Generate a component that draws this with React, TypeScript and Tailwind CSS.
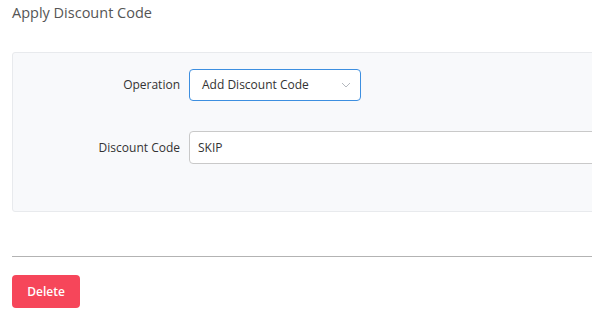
export default function App() {
  return (
    <div className="h-[318px] w-full overflow-hidden bg-white font-['Open_Sans',sans-serif]">
      <div className="w-[760px] pl-3">
        <h2 className="pt-[3px] text-[14.5px] leading-[20px] text-[#555]">Apply Discount Code</h2>

        <div className="mt-[29px] h-[160px] rounded-[3px] border border-[#e8eaed] bg-[#f8f9fb] pt-4">
          <div className="flex items-center">
            <label className="w-[176px] pr-[9px] text-right text-[12px] text-[#333]">Operation</label>
            <div className="flex h-[32px] w-[172px] items-center justify-between rounded-[4px] border border-[#3d8fe0] bg-white pl-3 pr-[9px] text-[12px] text-[#333]">
              <span>Add Discount Code</span>
              <svg width="10" height="6" viewBox="0 0 10 6" fill="none" stroke="#b5b9bf" strokeWidth="1">
                <path d="M1 1l4 4 4-4" />
              </svg>
            </div>
          </div>
          <div className="mt-[30px] flex items-center">
            <label className="w-[176px] pr-[9px] text-right text-[12px] text-[#333]">Discount Code</label>
            <input
              readOnly
              value="SKIP"
              className="h-[33px] w-[560px] rounded-[4px] border border-[#c9c9c9] bg-white px-2 text-[12px] text-[#333] outline-none"
            />
          </div>
        </div>

        <div className="mt-[44px] h-px bg-[#b3b3b3]" />

        <button className="mt-[18px] h-[33px] w-[68px] rounded-[4px] bg-[#f6465a] text-[12px] font-semibold text-white">
          Delete
        </button>
      </div>
    </div>
  );
}
